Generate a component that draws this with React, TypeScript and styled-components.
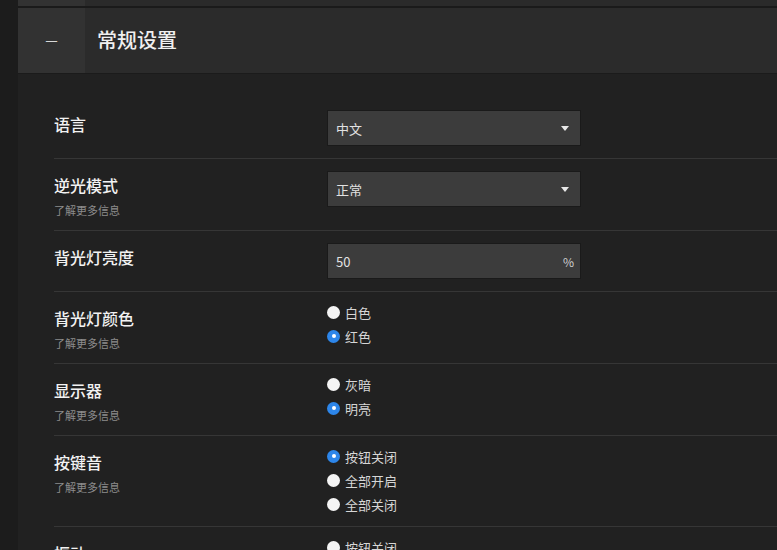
import styled, { createGlobalStyle } from "styled-components";
import { useState } from "react";

const GlobalStyle = createGlobalStyle`
  html, body {
    margin: 0;
    padding: 0;
    background: #1c1c1c;
    font-family: "Noto Sans CJK SC", "Noto Sans", sans-serif;
  }
`

const Page = styled.div`
  display: flex;
  height: 550px;
  overflow: hidden;
`
const Rail = styled.div`
  width: 18px;
  flex-shrink: 0;
  background: #1c1c1c;
`
const Main = styled.main`
  flex: 1;
  display: flex;
  flex-direction: column;
  background: #212121;
`
const PrevBar = styled.div`
  display: flex;
  height: 6px;
  background: #2a2a2a;
  border-bottom: 2px solid #1a1a1a;
`
const Toggle = styled.div<{ $h: number }>`
  width: 67px;
  height: ${(p) => p.$h}px;
  flex-shrink: 0;
  background: #323232;
  display: flex;
  align-items: center;
  justify-content: center;
  color: #d8d8d8;
  font-size: 14px;
  padding-bottom: ${(p) => (p.$h > 10 ? 4 : 0)}px;
  box-sizing: border-box;
`
const Header = styled.header`
  display: flex;
  align-items: center;
  height: 65px;
  background: #2b2b2b;
  border-bottom: 1px solid #1b1b1b;
`
const Title = styled.h2`
  margin: 0 0 3px 12px;
  font-size: 20px;
  font-weight: 500;
  color: #f0f0f0;
`
const Body = styled.div`
  padding: 24px 0 0 36px;
`
const Row = styled.div`
  display: grid;
  grid-template-columns: 273px 1fr;
  padding: 12px 0;
  border-bottom: 1px solid #363636;
`
const LabelBox = styled.div`
  padding-top: 2px;
`
const Label = styled.div`
  font-size: 16px;
  line-height: 24px;
  font-weight: 500;
  color: #f2f2f2;
`
const Sub = styled.div`
  margin-top: 5px;
  font-size: 11px;
  line-height: 16px;
  color: #8c8c8c;
`
const Select = styled.div`
  box-sizing: border-box;
  width: 254px;
  height: 36px;
  padding: 0 11px 0 8px;
  background: #3c3c3c;
  border: 1px solid #1a1a1a;
  display: flex;
  align-items: center;
  justify-content: space-between;
  font-size: 13px;
  color: #e2e2e2;
  cursor: pointer;
`
const Caret = styled.span`
  width: 0;
  height: 0;
  border-left: 4.5px solid transparent;
  border-right: 4.5px solid transparent;
  border-top: 5px solid #e8e8e8;
`
const Unit = styled.span`
  color: #d0d0d0;
  font-size: 12px;
  margin-right: -5px;
`
const RadioGroup = styled.div`
  display: flex;
  flex-direction: column;
  margin: -4px 0 -2px;
`
const RadioItem = styled.label`
  display: flex;
  align-items: center;
  height: 24px;
  gap: 5px;
  font-size: 13px;
  color: #d6d6d6;
  cursor: pointer;
`
const Dot = styled.span<{ $on: boolean }>`
  width: 13px;
  height: 13px;
  border-radius: 50%;
  background: ${(p) => (p.$on ? "#2d86ea" : "#f4f4f4")};
  display: flex;
  align-items: center;
  justify-content: center;
  &::after {
    content: "";
    width: 4px;
    height: 4px;
    border-radius: 50%;
    background: #fff;
    display: ${(p) => (p.$on ? "block" : "none")};
  }
`

function Radios({ options, initial }: { options: string[]; initial: number }) {
  const [sel, setSel] = useState(initial);
  return (
    <RadioGroup>
      {options.map((o, i) => (
        <RadioItem key={o} onClick={() => setSel(i)}>
          <Dot $on={sel === i} />
          {o}
        </RadioItem>
      ))}
    </RadioGroup>
  );
}

export default function App() {
  return (
    <Page>
      <GlobalStyle />
      <Rail />
      <Main>
        <PrevBar>
          <Toggle $h={6} />
        </PrevBar>
        <Header>
          <Toggle $h={65}>—</Toggle>
          <Title>常规设置</Title>
        </Header>
        <Body>
          <Row>
            <LabelBox>
              <Label>语言</Label>
            </LabelBox>
            <Select>
              中文
              <Caret />
            </Select>
          </Row>
          <Row>
            <LabelBox>
              <Label>逆光模式</Label>
              <Sub>了解更多信息</Sub>
            </LabelBox>
            <Select>
              正常
              <Caret />
            </Select>
          </Row>
          <Row>
            <LabelBox>
              <Label>背光灯亮度</Label>
            </LabelBox>
            <Select>
              50
              <Unit>%</Unit>
            </Select>
          </Row>
          <Row>
            <LabelBox>
              <Label>背光灯颜色</Label>
              <Sub>了解更多信息</Sub>
            </LabelBox>
            <Radios options={["白色", "红色"]} initial={1} />
          </Row>
          <Row>
            <LabelBox>
              <Label>显示器</Label>
              <Sub>了解更多信息</Sub>
            </LabelBox>
            <Radios options={["灰暗", "明亮"]} initial={1} />
          </Row>
          <Row>
            <LabelBox>
              <Label>按键音</Label>
              <Sub>了解更多信息</Sub>
            </LabelBox>
            <Radios options={["按钮关闭", "全部开启", "全部关闭"]} initial={0} />
          </Row>
          <Row>
            <LabelBox>
              <Label>振动</Label>
              <Sub>了解更多信息</Sub>
            </LabelBox>
            <Radios options={["按钮关闭", "全部开启", "全部关闭"]} initial={-1} />
          </Row>
        </Body>
      </Main>
    </Page>
  );
}
